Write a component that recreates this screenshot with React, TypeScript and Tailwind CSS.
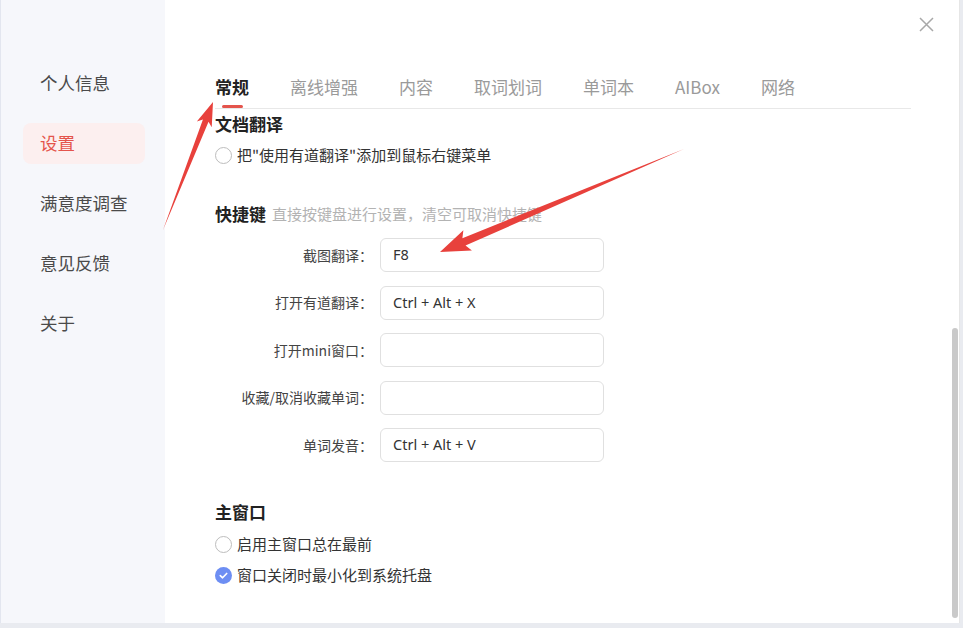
import React from "react";

const sideItems = ["个人信息", "设置", "满意度调查", "意见反馈", "关于"];
const tabs = ["常规", "离线增强", "内容", "取词划词", "单词本", "AIBox", "网络"];
const shortcuts: [string, string][] = [
  ["截图翻译：", "F8"],
  ["打开有道翻译：", "Ctrl + Alt + X"],
  ["打开mini窗口：", ""],
  ["收藏/取消收藏单词：", ""],
  ["单词发音：", "Ctrl + Alt + V"],
];

function Radio({ label, checked }: { label: string; checked?: boolean }) {
  return (
    <div className="flex h-[22px] items-center gap-[5px]">
      {checked ? (
        <span className="flex h-[17px] w-[17px] items-center justify-center rounded-full bg-[#6d8ef3]">
          <svg width="11" height="11" viewBox="0 0 12 12">
            <path d="M2.5 6.2 L5 8.5 L9.5 3.8" fill="none" stroke="#fff" strokeWidth="1.8" strokeLinecap="round" strokeLinejoin="round" />
          </svg>
        </span>
      ) : (
        <span className="h-[17px] w-[17px] rounded-full border border-[#bdbdbd] bg-white" />
      )}
      <span className="text-[15px] text-[#333]">{label}</span>
    </div>
  );
}

function Arrow({ x1, y1, x2, y2, h, H, w }: { x1: number; y1: number; x2: number; y2: number; h: number; H: number; w: number }) {
  const dx = x2 - x1;
  const dy = y2 - y1;
  const L = Math.sqrt(dx * dx + dy * dy);
  const a = (Math.atan2(dy, dx) * 180) / Math.PI;
  const pts = [
    [0, 0],
    [L - h, -w],
    [L - h - 4, -H],
    [L, 0],
    [L - h - 4, H],
    [L - h, w],
  ]
    .map((p) => p.join(","))
    .join(" ");
  return (
    <g transform={`translate(${x1},${y1}) rotate(${a})`}>
      <polygon points={pts} fill="#e8413c" />
    </g>
  );
}

export default function App() {
  return (
    <div className="relative h-[628px] w-[963px] overflow-hidden bg-[#e9ebf0] font-['Noto_Sans_CJK_SC','Noto_Sans',sans-serif]">
      <div className="flex h-[623px] w-[960px]">
        {/* Sidebar */}
        <div className="flex w-[165px] flex-col gap-[19px] border-l border-[#e3e6ef] bg-[#f6f7fb] pl-[22px] pr-[20px] pt-[63px]">
          {sideItems.map((s) => {
            const active = s === "设置";
            return (
              <div
                key={s}
                className={`flex h-[41px] items-center rounded-[8px] pl-[17px] text-[17.5px] ${
                  active ? "bg-[#fcefef] text-[#e4544c]" : "text-[#4a4a4a]"
                }`}
              >
                {s}
              </div>
            );
          })}
        </div>

        {/* Main */}
        <div className="relative flex flex-1 border-r border-[#e6e6e6] bg-white">
          <div className="flex-1 pl-[50px] pr-[41px] pt-[75px]">
            {/* Tabs */}
            <div className="flex gap-[41px] border-b border-[#e8e8e8]">
              {tabs.map((t) => {
                const active = t === "常规";
                return (
                  <div key={t} className="flex flex-col">
                    <div className={`h-[24px] text-[17px] leading-[24px] ${active ? "font-bold text-[#222]" : "text-[#9a9a9a]"}`}>{t}</div>
                    <div className={`ml-[7px] mt-[6px] h-[3px] w-[21px] rounded-full ${active ? "bg-[#e4544c]" : "bg-transparent"}`} />
                  </div>
                );
              })}
            </div>

            <div className="mt-[3px] text-[17px] font-bold leading-[24px] text-[#222]">文档翻译</div>
            <div className="mt-[8px]">
              <Radio label={'把"使用有道翻译"添加到鼠标右键菜单'} />
            </div>

            <div className="mt-[36px] flex h-[24px] items-center gap-[6px]">
              <span className="text-[17px] font-bold text-[#222]">快捷键</span>
              <span className="text-[15px] text-[#b3b3b3]">直接按键盘进行设置，清空可取消快捷键</span>
            </div>

            <div className="mt-[12px] flex flex-col gap-[13.5px]">
              {shortcuts.map(([label, val]) => (
                <div key={label} className="flex items-center">
                  <div className="w-[158px] text-right text-[14px] text-[#444]">{label}</div>
                  <div className="ml-[7px] flex h-[34px] w-[224px] items-center rounded-[6px] border border-[#e0e0e0] px-[12px] font-['Noto_Sans','Noto_Sans_CJK_SC',sans-serif] text-[14.5px] text-[#333]">
                    {val}
                  </div>
                </div>
              ))}
            </div>

            <div className="mt-[38px] text-[17px] font-bold leading-[24px] text-[#222]">主窗口</div>
            <div className="mt-[9px] flex flex-col gap-[9px]">
              <Radio label="启用主窗口总在最前" />
              <Radio label="窗口关闭时最小化到系统托盘" checked />
            </div>
          </div>

          {/* Scrollbar */}
          <div className="mr-[1px] flex w-[6px] flex-col pb-[5px] pt-[328px]">
            <div className="flex-1 rounded-full bg-[#c9c9c9]" />
          </div>

          {/* Close */}
          <button className="absolute right-[25px] top-[17px] h-[15px] w-[15px]">
            <svg width="15" height="15" viewBox="0 0 15 15">
              <path d="M1 1 L14 14 M14 1 L1 14" stroke="#a8a8a8" strokeWidth="1.5" />
            </svg>
          </button>
        </div>
      </div>

      {/* Annotation arrows */}
      <svg className="pointer-events-none absolute left-0 top-0" width="963" height="628">
        <Arrow x1={163} y1={230} x2={213} y2={102} h={20} H={8} w={3} />
        <Arrow x1={684} y1={149} x2={440} y2={252} h={26} H={11} w={4} />
      </svg>
    </div>
  );
}
